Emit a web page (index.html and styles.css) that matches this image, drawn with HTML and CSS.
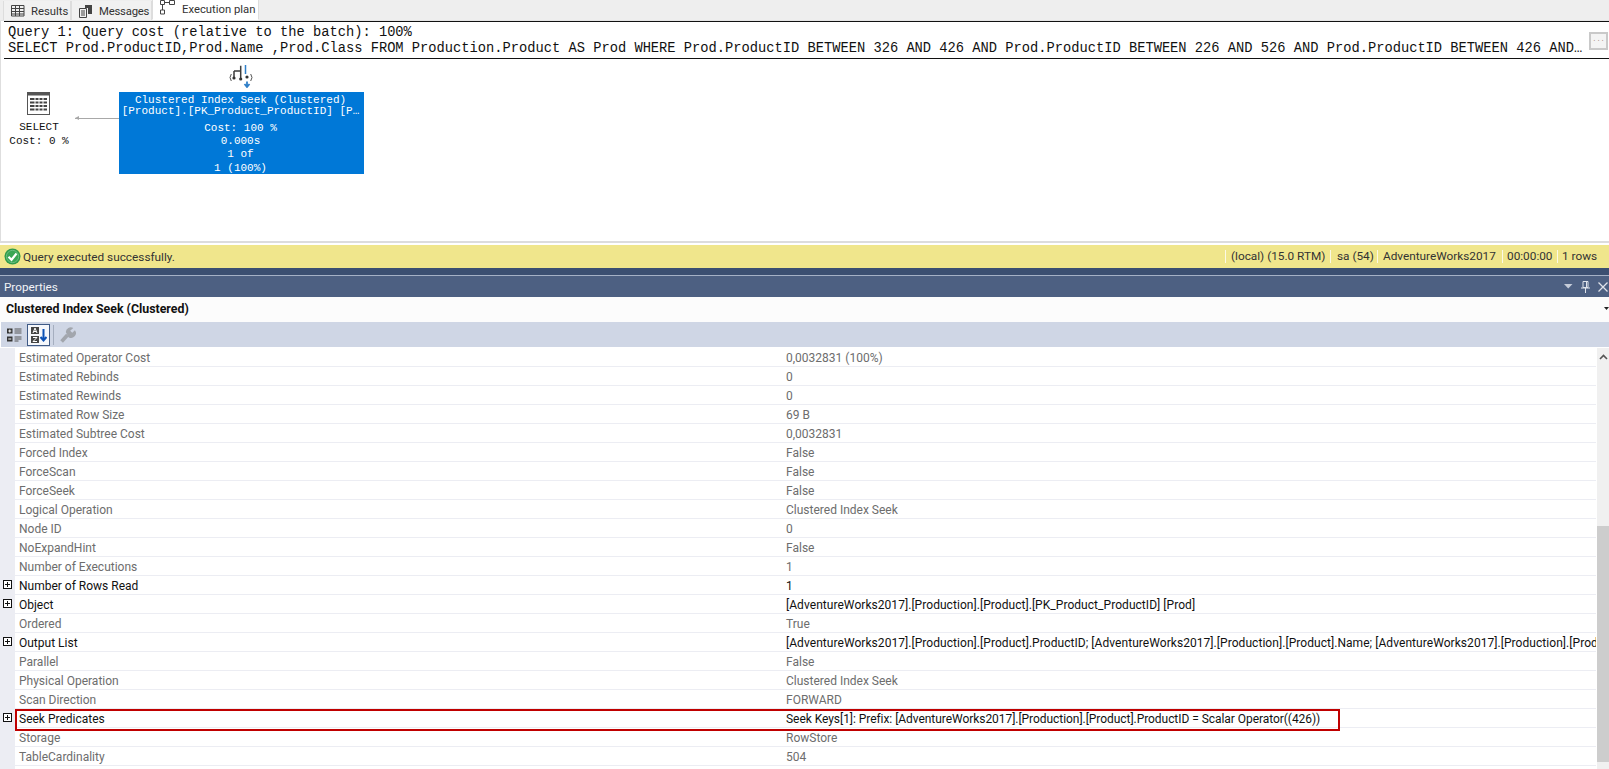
FILE: index.html
```html
<!DOCTYPE html>
<html lang="en">
<head>
<meta charset="utf-8">
<title>Execution plan</title>
<link rel="stylesheet" href="styles.css">
</head>
<body>
<div class="page">
  <div class="tabs">
    <div class="tab tab-results">
      <svg width="14" height="12" viewBox="0 0 14 12"><path d="M.5.5h12.500v10.500H.5zM.5 3.500h12.500M.5 6.500h12.500M.5 9h12.500M4.500 .5v10.500M8.500 .5v10.500" fill="none" stroke="#444"/></svg>
      <span>Results</span>
    </div>
    <div class="tab tab-messages">
      <svg width="14" height="14" viewBox="0 0 14 14"><path d="M.5 4.500h7v9h-7zM2 7h4M2 9h4M2 11h4" fill="none" stroke="#444"/><path d="M6 1h7v9H9V4H6z" fill="#444"/></svg>
      <span>Messages</span>
    </div>
    <div class="tab tab-plan">
      <svg width="15" height="15" viewBox="0 0 15 15"><path d="M.5.5h4v4h-4zM9.500.5h5v4h-5zM.5 10h4v4h-4zM4.500 2.500h5M2.500 4.500V10" fill="none" stroke="#444"/></svg>
      <span>Execution plan</span>
    </div>
  </div>

  <section class="plan">
    <div class="query">
      <div class="query-line">Query 1: Query cost (relative to the batch): 100%</div>
      <div class="query-line">SELECT Prod.ProductID,Prod.Name ,Prod.Class FROM Production.Product AS Prod WHERE Prod.ProductID BETWEEN 326 AND 426 AND Prod.ProductID BETWEEN 226 AND 526 AND Prod.ProductID BETWEEN 426 AND…</div>
      <div class="more"><span>...</span></div>
    </div>
    <div class="canvas">
      <div class="op-select">
        <svg width="24" height="24" viewBox="0 0 24 24"><rect x="0.500" y="0.500" width="22" height="22" fill="#fff" stroke="#555"/><rect x="0" y="0" width="23" height="3.500" fill="#555"/><path d="M3 7h17M3 10.500h17M3 14h17M3 17.500h17" stroke="#444" stroke-width="2"/><path d="M8 5v15M12 5v15M16 5v15" stroke="#fff"/></svg>
        <div class="op-name">SELECT</div>
        <div class="op-cost">Cost: 0 %</div>
      </div>
      <div class="arrow"></div>
      <svg class="seek-icon" width="24" height="24" viewBox="0 0 24 24"><path d="M5 7h6.700M11.700 1.700V15M5 7v6" fill="none" stroke="#3d3d3d" stroke-width="1.500"/><circle cx="5" cy="14" r="1.600" fill="#333"/><circle cx="11.700" cy="15" r="1.600" fill="#333"/><path d="M2.300 10 1 13.500 2.300 17M21.700 10 23 13.500 21.700 17" fill="none" stroke="#555"/><path d="M16.500 1v9" stroke="#2f7fc8" stroke-width="1.500"/><circle cx="18" cy="13" r="1.600" fill="#333"/><path d="M18 17.500V23M15.500 20l2.500 3 2.500-3" fill="none" stroke="#2f7fc8" stroke-width="1.800"/></svg>
      <div class="node">
        <div class="node-title">Clustered Index Seek (Clustered)</div>
        <div class="node-title">[Product].[PK_Product_ProductID] [P…</div>
        <div class="node-cost">Cost: 100 %</div>
        <div class="node-stat">0.000s</div>
        <div class="node-stat">1 of</div>
        <div class="node-stat">1 (100%)</div>
      </div>
    </div>
  </section>

  <div class="status">
    <svg class="ok" width="17" height="17" viewBox="0 0 17 17"><circle cx="8.500" cy="8.500" r="8" fill="#2e9b4a"/><circle cx="8.500" cy="8.500" r="6.200" fill="#3aa655" stroke="#8fce9f" stroke-width="0.600"/><path d="M4.500 8.800 7.500 11.800 12.500 5.500" fill="none" stroke="#fff" stroke-width="2.200"/></svg>
    <span class="status-msg">Query executed successfully.</span>
    <span class="cell cell-server">(local) (15.0 RTM)</span>
    <span class="cell cell-user">sa (54)</span>
    <span class="cell cell-db">AdventureWorks2017</span>
    <span class="cell cell-time">00:00:00</span>
    <span class="cell cell-rows">1 rows</span>
  </div>
  <div class="divider"></div>

  <section class="props">
    <header class="props-title">
      <span>Properties</span>
      <div class="title-btns">
        <svg width="9" height="5" viewBox="0 0 9 5"><path d="M0 0h8.500L4.250 4.500z" fill="#c5ccd9"/></svg>
        <svg width="9" height="12" viewBox="0 0 9 12"><path d="M2 .5h5v6H2zM5.500 .5v6M0 7h9M4.500 7v5" fill="none" stroke="#dfe3ea"/></svg>
        <svg width="10" height="10" viewBox="0 0 10 10"><path d="M.5.5l9 9M9.500.5l-9 9" stroke="#dfe3ea" stroke-width="1.300"/></svg>
      </div>
    </header>
    <div class="object-row">
      <span>Clustered Index Seek (Clustered)</span>
      <svg width="5" height="3" viewBox="0 0 5 3"><path d="M0 0h5L2.500 3z" fill="#222"/></svg>
    </div>
    <div class="toolbar">
      <svg class="tool" width="15" height="14" viewBox="0 0 15 14"><path d="M0 .5h5.500v5H0zM0 8.500h5.500v5H0z" fill="#333"/><path d="M1.300 3h3M2.800 1.500v3M1.300 11h3" stroke="#fff"/><path d="M7.500 1h7M7.500 3h7M7.500 5h7M7.500 9h7M7.500 11h7M7.500 13h4" stroke="#555"/></svg>
      <div class="tool-on">
        <svg width="16" height="16" viewBox="0 0 16 16"><rect x="0" y="0" width="8" height="7" fill="#444"/><rect x="0" y="9" width="8" height="7" fill="#444"/><path d="M4 1 2 6M4 1l2 5M3 4.500h2" stroke="#fff" fill="none"/><path d="M2 10.500h4L2 14.500h4" stroke="#fff" fill="none"/><path d="M12.500 2v11M9.500 10l3 3.500 3-3.500" fill="none" stroke="#0b50b5" stroke-width="2"/></svg>
      </div>
      <div class="tool-sep"></div>
      <svg class="tool" width="16" height="16" viewBox="0 0 15 15"><path d="M1.500 13.500 7 7.500" stroke="#a2a6ad" stroke-width="3.500"/><path d="M5.500 5a4.500 4.500 0 0 1 7-4l-3 2.500 2 2 2.500-2.500A4.500 4.500 0 0 1 8 9.500z" fill="#a2a6ad"/></svg>
    </div>
    <div class="grid-wrap">
      <div class="grid">
        <div class="row"><div class="name">Estimated Operator Cost</div><div class="val">0,0032831 (100%)</div></div>
        <div class="row"><div class="name">Estimated Rebinds</div><div class="val">0</div></div>
        <div class="row"><div class="name">Estimated Rewinds</div><div class="val">0</div></div>
        <div class="row"><div class="name">Estimated Row Size</div><div class="val">69 B</div></div>
        <div class="row"><div class="name">Estimated Subtree Cost</div><div class="val">0,0032831</div></div>
        <div class="row"><div class="name">Forced Index</div><div class="val">False</div></div>
        <div class="row"><div class="name">ForceScan</div><div class="val">False</div></div>
        <div class="row"><div class="name">ForceSeek</div><div class="val">False</div></div>
        <div class="row"><div class="name">Logical Operation</div><div class="val">Clustered Index Seek</div></div>
        <div class="row"><div class="name">Node ID</div><div class="val">0</div></div>
        <div class="row"><div class="name">NoExpandHint</div><div class="val">False</div></div>
        <div class="row"><div class="name">Number of Executions</div><div class="val">1</div></div>
        <div class="row active"><span class="plus"></span><div class="name">Number of Rows Read</div><div class="val">1</div></div>
        <div class="row active"><span class="plus"></span><div class="name">Object</div><div class="val val-object">[AdventureWorks2017].[Production].[Product].[PK_Product_ProductID] [Prod]</div></div>
        <div class="row"><div class="name">Ordered</div><div class="val">True</div></div>
        <div class="row active"><span class="plus"></span><div class="name">Output List</div><div class="val val-long">[AdventureWorks2017].[Production].[Product].ProductID; [AdventureWorks2017].[Production].[Product].Name; [AdventureWorks2017].[Production].[Prod</div></div>
        <div class="row"><div class="name">Parallel</div><div class="val">False</div></div>
        <div class="row"><div class="name">Physical Operation</div><div class="val">Clustered Index Seek</div></div>
        <div class="row"><div class="name">Scan Direction</div><div class="val">FORWARD</div></div>
        <div class="row active row-marked"><span class="plus"></span><div class="name">Seek Predicates</div><div class="val val-seek">Seek Keys[1]: Prefix: [AdventureWorks2017].[Production].[Product].ProductID = Scalar Operator((426))</div><div class="highlight"></div></div>
        <div class="row"><div class="name">Storage</div><div class="val">RowStore</div></div>
        <div class="row"><div class="name">TableCardinality</div><div class="val">504</div></div>
      </div>
      <div class="scrollbar">
        <svg class="sb-up" width="9" height="6" viewBox="0 0 9 6"><path d="M1 5l3.500-3.500L8 5" fill="none" stroke="#555" stroke-width="1.600"/></svg>
        <div class="thumb"></div>
      </div>
    </div>
  </section>
</div>
</body>
</html>
```
FILE: styles.css
```css
* { box-sizing: border-box; }
html, body { margin: 0; padding: 0; height: 100%; overflow: hidden; background: #fff; }
body { font-family: Roboto, "Liberation Sans", sans-serif; font-size: 12px; color: #222; }
.page { width: 1609px; height: 769px; display: flex; flex-direction: column; overflow: hidden; }

.tabs { height: 21px; flex: none; display: flex; background: #eeeeee; padding-left: 3px; align-items: flex-end; border-bottom: 1px solid #e4e4e4; }
.tab { display: flex; align-items: center; height: 19px; font-size: 11.300px; color: #333; background: #f1f1f1; border-left: 1px solid #ddd; border-right: 1px solid #ddd; white-space: nowrap; flex: none; }
.tab span { margin-top: 1px; }
.tab-results { width: 68px; padding-left: 7px; gap: 6px; }
.tab-messages { width: 81px; padding-left: 7px; gap: 6px; letter-spacing: -0.200px; }
.tab-plan { width: 107px; height: 21px; padding-left: 7px; gap: 7px; background: #fff; border-bottom: 1px solid #fff; }
.tab-plan svg { margin-top: -3px; }
.tab-plan span { margin-top: 0; }

.plan { height: 222px; flex: none; display: flex; flex-direction: column; border-left: 1px solid #dedede; border-bottom: 2px solid #dcdcdc; }
.query { position: relative; height: 38px; flex: none; border-top: 1px solid #111; border-bottom: 1px solid #111; margin-left: 3px; padding: 3px 0 0 4px; font-family: "Liberation Mono", "Courier New", monospace; font-size: 13.740px; color: #111; }
.query-line { height: 16px; line-height: 16px; white-space: nowrap; }
.more { position: absolute; right: 1px; top: 10px; width: 19px; height: 18px; border: 2px solid #c9c9c9; background: #f4f4f4; display: flex; justify-content: center; font-size: 7px; line-height: 10px; color: #b0968c; }

.canvas { position: relative; flex: 1; font-family: "Liberation Mono", "Courier New", monospace; font-size: 11px; }
.op-select { position: absolute; left: -1px; top: 33px; width: 78px; display: flex; flex-direction: column; align-items: center; color: #111; }
.op-name { margin-top: 4px; height: 14px; line-height: 14px; }
.op-cost { height: 15px; line-height: 15px; }
.arrow { position: absolute; left: 74px; top: 59px; width: 44px; height: 1px; background: #a8a8a8; }
.arrow::before { content: ""; position: absolute; left: 0; top: -2px; border-right: 4px solid #a8a8a8; border-top: 2.500px solid transparent; border-bottom: 2.500px solid transparent; }
.seek-icon { position: absolute; left: 228px; top: 5px; }
.node { position: absolute; left: 118px; top: 33px; width: 245px; height: 82px; background: #0078d7; color: #fff; text-align: center; padding: 3px 2px 0 0; white-space: nowrap; }
.node-title { height: 10.500px; line-height: 11px; }
.node-cost { margin-top: 5px; height: 14px; line-height: 14px; }
.node-stat { height: 13.300px; line-height: 13px; }

.status { height: 23px; flex: none; margin-top: 2px; background: #f0e68c; display: flex; align-items: center; padding-left: 4px; font-size: 11.800px; color: #333; position: relative; }
.status-msg { margin-left: 2px; flex: 1; }
.cell { height: 13px; line-height: 13px; display: flex; align-items: center; padding-left: 5px; border-left: 1px solid #fbf9e6; flex: none; white-space: nowrap; }
.cell-server { width: 105px; }
.cell-user { width: 47px; padding-left: 6px; }
.cell-db { width: 125px; }
.cell-time { width: 55px; padding-left: 4px; }
.cell-rows { width: 52px; padding-left: 4px; }

.divider { height: 8px; flex: none; background: #3b4f71; border-bottom: 1px solid #a5b1c6; }

.props { flex: 1; min-height: 0; display: flex; flex-direction: column; }
.props-title { height: 21px; flex: none; background: #4d6082; color: #f2f4f7; font-size: 11.700px; display: flex; align-items: center; justify-content: space-between; padding-left: 4px; padding-right: 1px; }
.title-btns { display: flex; align-items: center; gap: 8px; }
.object-row { height: 25px; flex: none; background: #fcfcfc; display: flex; align-items: center; justify-content: space-between; padding: 0 0 2px 6px; font-weight: 700; font-size: 12.350px; color: #111; }
.toolbar { height: 25px; flex: none; background: #cfd6e5; margin-left: 1px; display: flex; align-items: center; gap: 5px; padding-left: 6px; }
.tool-on { width: 23px; height: 22px; background: #f5f7fb; border: 1px solid #3f5a86; display: flex; align-items: center; justify-content: center; }
.tool-sep { width: 1px; height: 20px; background: #a5aebf; margin-left: -2px; margin-right: 1px; }

.grid-wrap { flex: 1; min-height: 0; display: flex; padding-top: 1px; }
.grid { flex: 1; border-left: 15px solid #ecedf3; min-width: 0; margin-right: 1px; }
.row { position: relative; height: 19px; display: flex; align-items: center; background: #fff; border-bottom: 1px solid #ecedf3; color: #6d6d6d; font-size: 12px; padding-top: 2px; }
.row.active { color: #111; }
.row-marked { z-index: 1; }
.name { width: 766px; padding-left: 4px; flex: none; }
.val { flex: 1; min-width: 0; white-space: nowrap; overflow: hidden; padding-left: 5px; }
.val-long { letter-spacing: 0.055px; }
.val-object { letter-spacing: 0.05px; }
.val-seek { letter-spacing: -0.05px; }
.plus { position: absolute; left: -12px; top: 4px; width: 9px; height: 9px; border: 1px solid #111; background: linear-gradient(#111, #111) center / 5px 1px no-repeat, linear-gradient(#111, #111) center / 1px 5px no-repeat, #fff; }
.highlight { position: absolute; left: 0; top: 0; width: 1325px; height: 22px; border: 2px solid #c00000; pointer-events: none; }
.scrollbar { width: 12px; flex: none; background: #f0f0f0; display: flex; flex-direction: column; align-items: center; }
.sb-up { margin-top: 6px; flex: none; }
.thumb { width: 100%; height: 236px; margin-top: 166px; background: #cdcdcd; flex: none; }
```
